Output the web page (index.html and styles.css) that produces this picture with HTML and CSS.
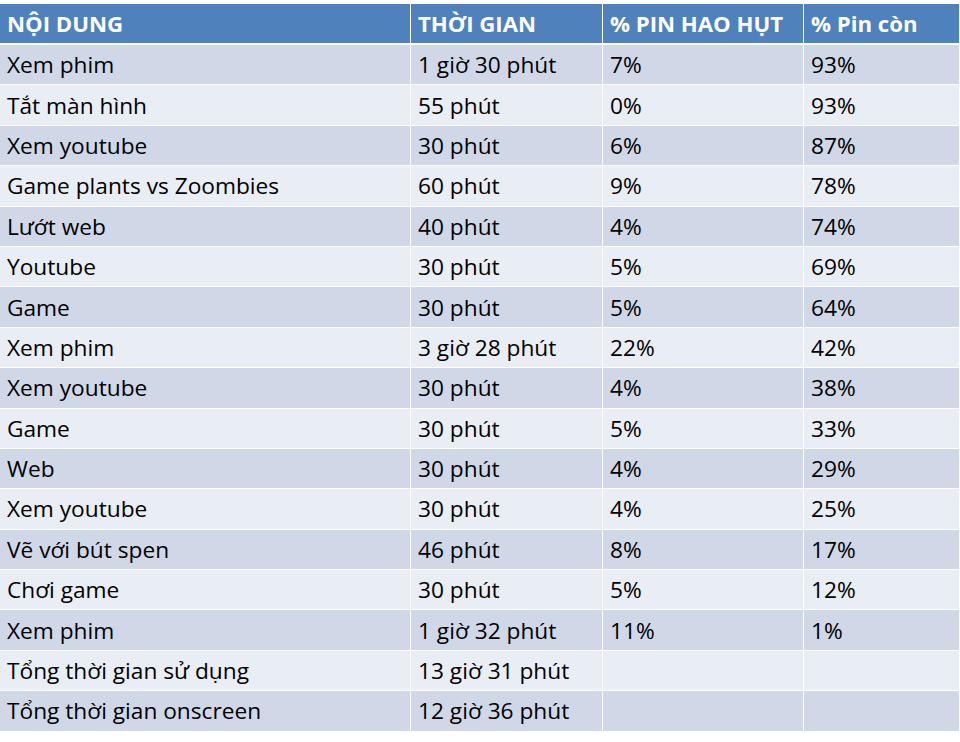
FILE: index.html
```html
<!DOCTYPE html>
<html lang="vi">
<head>
<meta charset="utf-8">
<title>Pin</title>
<link rel="stylesheet" href="styles.css">
</head>
<body>
<div class="table">
  <div class="row head"><div class="cell">NỘI DUNG</div><div class="cell">THỜI GIAN</div><div class="cell">% PIN HAO HỤT</div><div class="cell">% Pin còn</div></div>
  <div class="row odd"><div class="cell">Xem phim</div><div class="cell">1 giờ 30 phút</div><div class="cell">7%</div><div class="cell">93%</div></div>
  <div class="row even"><div class="cell">Tắt màn hình</div><div class="cell">55 phút</div><div class="cell">0%</div><div class="cell">93%</div></div>
  <div class="row odd"><div class="cell">Xem youtube</div><div class="cell">30 phút</div><div class="cell">6%</div><div class="cell">87%</div></div>
  <div class="row even"><div class="cell">Game plants vs Zoombies</div><div class="cell">60 phút</div><div class="cell">9%</div><div class="cell">78%</div></div>
  <div class="row odd"><div class="cell">Lướt web</div><div class="cell">40 phút</div><div class="cell">4%</div><div class="cell">74%</div></div>
  <div class="row even"><div class="cell">Youtube</div><div class="cell">30 phút</div><div class="cell">5%</div><div class="cell">69%</div></div>
  <div class="row odd"><div class="cell">Game</div><div class="cell">30 phút</div><div class="cell">5%</div><div class="cell">64%</div></div>
  <div class="row even"><div class="cell">Xem phim</div><div class="cell">3 giờ 28 phút</div><div class="cell">22%</div><div class="cell">42%</div></div>
  <div class="row odd"><div class="cell">Xem youtube</div><div class="cell">30 phút</div><div class="cell">4%</div><div class="cell">38%</div></div>
  <div class="row even"><div class="cell">Game</div><div class="cell">30 phút</div><div class="cell">5%</div><div class="cell">33%</div></div>
  <div class="row odd"><div class="cell">Web</div><div class="cell">30 phút</div><div class="cell">4%</div><div class="cell">29%</div></div>
  <div class="row even"><div class="cell">Xem youtube</div><div class="cell">30 phút</div><div class="cell">4%</div><div class="cell">25%</div></div>
  <div class="row odd"><div class="cell">Vẽ với bút spen</div><div class="cell">46 phút</div><div class="cell">8%</div><div class="cell">17%</div></div>
  <div class="row even"><div class="cell">Chơi game</div><div class="cell">30 phút</div><div class="cell">5%</div><div class="cell">12%</div></div>
  <div class="row odd"><div class="cell">Xem phim</div><div class="cell">1 giờ 32 phút</div><div class="cell">11%</div><div class="cell">1%</div></div>
  <div class="row even"><div class="cell">Tổng thời gian sử dụng</div><div class="cell">13 giờ 31 phút</div><div class="cell"></div><div class="cell"></div></div>
  <div class="row odd"><div class="cell">Tổng thời gian onscreen</div><div class="cell">12 giờ 36 phút</div><div class="cell"></div><div class="cell"></div></div>
</div>
</body>
</html>
```
FILE: styles.css
```css
html, body {
  margin: 0;
  padding: 0;
  background: #ffffff;
}
body {
  font-family: "Open Sans", "Noto Sans", sans-serif;
  color: #000000;
}
.table {
  display: flex;
  flex-direction: column;
  gap: 1px;
  width: 959px;
  margin-top: 4px;
}
.row {
  display: grid;
  grid-template-columns: 410px 191px 200px 155px;
  column-gap: 1px;
  height: 39.4px;
}
.row.head {
  height: 39px;
  margin-bottom: 1px;
}
.cell {
  display: flex;
  align-items: center;
  padding-left: 7px;
  font-size: 22.7px;
  white-space: nowrap;
  overflow: hidden;
}
.head .cell {
  background: #4f81bd;
  color: #ffffff;
  font-weight: 700;
  font-size: 22.2px;
}
.odd .cell {
  background: #d0d8e8;
}
.even .cell {
  background: #e9edf4;
}
```
